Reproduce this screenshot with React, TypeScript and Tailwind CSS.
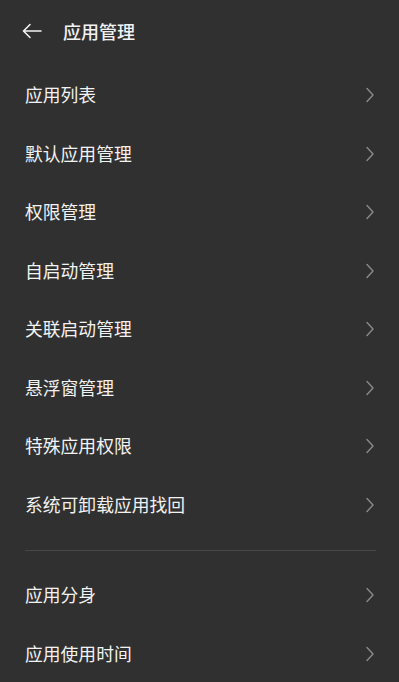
import React from 'react'

const groupA = [
  '应用列表',
  '默认应用管理',
  '权限管理',
  '自启动管理',
  '关联启动管理',
  '悬浮窗管理',
  '特殊应用权限',
  '系统可卸载应用找回',
]

const groupB = ['应用分身', '应用使用时间']

function Chevron() {
  return (
    <svg width="10" height="16" viewBox="0 0 10 16" fill="none" className="shrink-0">
      <path d="M2 1.5 L8 8 L2 14.5" stroke="#8a8a8a" strokeWidth="1.4" strokeLinecap="round" strokeLinejoin="round" />
    </svg>
  )
}

function Row({ label }: { label: string }) {
  return (
    <div className="flex h-[58.5px] items-center justify-between pl-[25px] pr-[24px]">
      <span className="text-[17.8px] leading-none text-[#f2f2f2]">{label}</span>
      <Chevron />
    </div>
  )
}

export default function App() {
  return (
    <div
      className="min-h-[682px] w-full overflow-hidden bg-[#303030]"
      style={{ fontFamily: '"Noto Sans CJK SC", "Noto Sans", sans-serif' }}
    >
      <div className="flex h-[62px] items-center pl-[22px]">
        <svg width="20" height="16" viewBox="0 0 20 16" fill="none">
          <path d="M19 8 H2 M8 1.5 L1.5 8 L8 14.5" stroke="#f2f2f2" strokeWidth="1.6" strokeLinecap="round" strokeLinejoin="round" />
        </svg>
        <span className="ml-[21px] text-[18px] leading-none font-medium text-[#f2f2f2]">应用管理</span>
      </div>
      <div className="pt-[4px]">
        {groupA.map((l) => (
          <Row key={l} label={l} />
        ))}
      </div>
      <div className="py-[15.5px] pl-[25px] pr-[23px]">
        <div className="h-px bg-[#474747]" />
      </div>
      <div>
        {groupB.map((l) => (
          <Row key={l} label={l} />
        ))}
      </div>
    </div>
  )
}
